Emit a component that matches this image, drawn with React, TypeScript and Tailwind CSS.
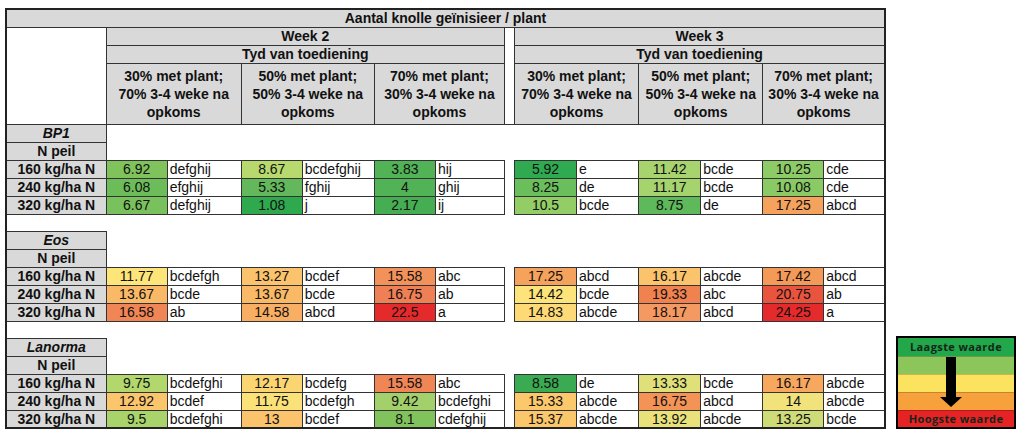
import React from "react";

type Cell = [string, string, string];
type Row = { label: string; w2: Cell[]; w3: Cell[] };
type Group = { name: string; rows: Row[] };

const groups: Group[] = [
  {
    name: "BP1",
    rows: [
      {
        label: "160 kg/ha N",
        w2: [
          ["6.92", "defghij", "bg-[#80c35c]"],
          ["8.67", "bcdefghij", "bg-[#b8d96e]"],
          ["3.83", "hij", "bg-[#52b256]"],
        ],
        w3: [
          ["5.92", "e", "bg-[#2faa50]"],
          ["11.42", "bcde", "bg-[#a8d470]"],
          ["10.25", "cde", "bg-[#8ccb65]"],
        ],
      },
      {
        label: "240 kg/ha N",
        w2: [
          ["6.08", "efghij", "bg-[#6cbd5a]"],
          ["5.33", "fghij", "bg-[#62b85a]"],
          ["4", "ghij", "bg-[#52b256]"],
        ],
        w3: [
          ["8.25", "de", "bg-[#6abe5c]"],
          ["11.17", "bcde", "bg-[#a5d36d]"],
          ["10.08", "cde", "bg-[#89ca64]"],
        ],
      },
      {
        label: "320 kg/ha N",
        w2: [
          ["6.67", "defghij", "bg-[#79c15c]"],
          ["1.08", "j", "bg-[#2fa94e]"],
          ["2.17", "ij", "bg-[#45ae53]"],
        ],
        w3: [
          ["10.5", "bcde", "bg-[#92cd66]"],
          ["8.75", "de", "bg-[#5db95a]"],
          ["17.25", "abcd", "bg-[#f5a25c]"],
        ],
      },
    ],
  },
  {
    name: "Eos",
    rows: [
      {
        label: "160 kg/ha N",
        w2: [
          ["11.77", "bcdefgh", "bg-[#fde57a]"],
          ["13.27", "bcdef", "bg-[#fbc36c]"],
          ["15.58", "abc", "bg-[#f2915a]"],
        ],
        w3: [
          ["17.25", "abcd", "bg-[#f5a25c]"],
          ["16.17", "abcde", "bg-[#fbc36c]"],
          ["17.42", "abcd", "bg-[#f39a59]"],
        ],
      },
      {
        label: "240 kg/ha N",
        w2: [
          ["13.67", "bcde", "bg-[#f9b967]"],
          ["13.67", "bcde", "bg-[#f9b967]"],
          ["16.75", "ab", "bg-[#ef7f54]"],
        ],
        w3: [
          ["14.42", "bcde", "bg-[#fde47a]"],
          ["19.33", "abc", "bg-[#f0824f]"],
          ["20.75", "ab", "bg-[#e9543f]"],
        ],
      },
      {
        label: "320 kg/ha N",
        w2: [
          ["16.58", "ab", "bg-[#f08556]"],
          ["14.58", "abcd", "bg-[#f8ae63]"],
          ["22.5", "a", "bg-[#e52a2b]"],
        ],
        w3: [
          ["14.83", "abcde", "bg-[#fdda76]"],
          ["18.17", "abcd", "bg-[#f59962]"],
          ["24.25", "a", "bg-[#e52a2b]"],
        ],
      },
    ],
  },
  {
    name: "Lanorma",
    rows: [
      {
        label: "160 kg/ha N",
        w2: [
          ["9.75", "bcdefghi", "bg-[#b2d76c]"],
          ["12.17", "bcdefg", "bg-[#fbd571]"],
          ["15.58", "abc", "bg-[#f08556]"],
        ],
        w3: [
          ["8.58", "de", "bg-[#3aab52]"],
          ["13.33", "bcde", "bg-[#dfe07a]"],
          ["16.17", "abcde", "bg-[#f8a85e]"],
        ],
      },
      {
        label: "240 kg/ha N",
        w2: [
          ["12.92", "bcdef", "bg-[#fbc56c]"],
          ["11.75", "bcdefgh", "bg-[#fbe278]"],
          ["9.42", "bcdefghi", "bg-[#a3d06a]"],
        ],
        w3: [
          ["15.33", "abcde", "bg-[#fcc86c]"],
          ["16.75", "abcd", "bg-[#f39456]"],
          ["14", "abcde", "bg-[#f2e27c]"],
        ],
      },
      {
        label: "320 kg/ha N",
        w2: [
          ["9.5", "bcdefghi", "bg-[#a8d46b]"],
          ["13", "bcdef", "bg-[#fbc36c]"],
          ["8.1", "cdefghij", "bg-[#80c35c]"],
        ],
        w3: [
          ["15.37", "abcde", "bg-[#fcc66b]"],
          ["13.92", "abcde", "bg-[#e9e27b]"],
          ["13.25", "bcde", "bg-[#cfdb77]"],
        ],
      },
    ],
  },
];

const timings = [
  ["30% met plant;", "70% 3-4 weke na", "opkoms"],
  ["50% met plant;", "50% 3-4 weke na", "opkoms"],
  ["70% met plant;", "30% 3-4 weke na", "opkoms"],
];

const bd = "border border-[#333]";
const grey = "bg-[#d9d9d9]";

function DataCells({ cells }: { cells: Cell[] }) {
  return (
    <>
      {cells.map(([v, l, bg], i) => (
        <React.Fragment key={i}>
          <td className={`${bd} ${bg} text-center`}>{v}</td>
          <td className={`${bd} bg-white pl-[2px] text-left`}>{l}</td>
        </React.Fragment>
      ))}
    </>
  );
}

function Legend() {
  return (
    <div className="relative w-[120px] h-[93px] border-2 border-black flex flex-col font-['Open_Sans',sans-serif] font-bold text-[11px] tracking-[0.4px] text-[#14261a]">
      <div className="h-[18px] bg-[#22a74a] flex items-center justify-center">Laagste waarde</div>
      <div className="h-[18px] bg-[#8cc65a] border-t border-[#6a9a48]" />
      <div className="h-[18px] bg-[#fbe35f] border-t border-[#c9b64c]" />
      <div className="h-[18px] bg-[#f7a13d] border-t border-[#c88232]" />
      <div className="flex-1 bg-[#e52325] border-t border-[#b01c1e] flex items-center justify-center">Hoogste waarde</div>
      <svg className="absolute left-[42px] top-[19px]" width="22" height="50" viewBox="0 0 22 50">
        <rect x="6" y="0" width="10" height="41" fill="#000" />
        <polygon points="0,40 22,40 11,50" fill="#000" />
      </svg>
    </div>
  );
}

export default function App() {
  return (
    <div className="w-[1024px] bg-white flex items-end gap-[10px] pl-[5px] pt-[8px] font-['Liberation_Sans',Arial,sans-serif] text-[#111]">
      <table className="table-fixed border-collapse w-[881px] border-2 border-[#222] text-[14px] leading-none">
        <colgroup>
          <col className="w-[100px]" />
          <col className="w-[61px]" />
          <col className="w-[74px]" />
          <col className="w-[61px]" />
          <col className="w-[72px]" />
          <col className="w-[61px]" />
          <col className="w-[69px]" />
          <col className="w-[10px]" />
          <col className="w-[62px]" />
          <col className="w-[62px]" />
          <col className="w-[62px]" />
          <col className="w-[62px]" />
          <col className="w-[61px]" />
          <col className="w-[61px]" />
        </colgroup>
        <tbody className="font-bold text-[14px]">
          <tr className="h-[18px]">
            <td colSpan={14} className={`${bd} ${grey} text-center`}>
              Aantal knolle geïnisieer / plant
            </td>
          </tr>
          <tr className="h-[18px]">
            <td rowSpan={3} className={`${bd} bg-white`} />
            <td colSpan={6} className={`${bd} ${grey} text-center`}>Week 2</td>
            <td rowSpan={3} className={`${bd} bg-white`} />
            <td colSpan={6} className={`${bd} ${grey} text-center`}>Week 3</td>
          </tr>
          <tr className="h-[18px]">
            <td colSpan={6} className={`${bd} ${grey} text-center`}>Tyd van toediening</td>
            <td colSpan={6} className={`${bd} ${grey} text-center`}>Tyd van toediening</td>
          </tr>
          <tr className="h-[61px]">
            {[0, 1].map((w) =>
              timings.map((t, i) => (
                <td key={`${w}-${i}`} colSpan={2} className={`${bd} ${grey} text-center leading-[18px]`}>
                  {t.map((line) => (
                    <div key={line}>{line}</div>
                  ))}
                </td>
              ))
            )}
          </tr>
        </tbody>
        {groups.map((g, gi) => (
          <tbody key={g.name}>
            {gi > 0 && (
              <tr className="h-[17px]">
                <td colSpan={14} />
              </tr>
            )}
            <tr className="h-[18px]">
              <td className={`${bd} ${grey} text-center font-bold italic text-[14px]`}>{g.name}</td>
              <td colSpan={13} />
            </tr>
            <tr className="h-[18px]">
              <td className={`${bd} ${grey} text-center font-bold text-[14px]`}>N peil</td>
              <td colSpan={13} />
            </tr>
            {g.rows.map((r) => (
              <tr key={r.label} className="h-[18px]">
                <td className={`${bd} ${grey} text-center font-bold text-[14px]`}>{r.label}</td>
                <DataCells cells={r.w2} />
                <td className="border-x border-[#333] bg-white" />
                <DataCells cells={r.w3} />
              </tr>
            ))}
          </tbody>
        ))}
      </table>
      <Legend />
    </div>
  );
}
